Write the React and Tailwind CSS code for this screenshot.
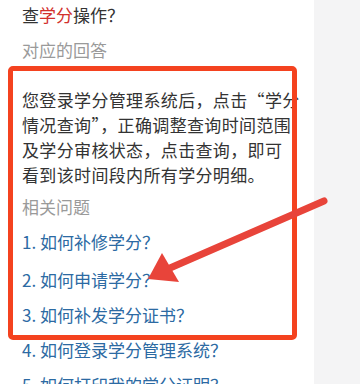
import React from "react";

export default function App() {
  const q = [
    { t: "1. 如何补修学分？", mt: "mt-[2px]" },
    { t: "2. 如何申请学分？", mt: "mt-[3px]" },
    { t: "3. 如何补发学分证书？", mt: "mt-0" },
    { t: "4. 如何登录学分管理系统？", mt: "mt-0" },
    { t: "5. 如何打印我的学分证明？", mt: "mt-0" },
  ];
  return (
    <div
      className="relative flex w-[360px] h-[384px] overflow-hidden bg-white"
      style={{ fontFamily: '"Noto Sans CJK SC", "Noto Sans", sans-serif' }}
    >
      <div className="w-[314px] shrink-0 bg-white pl-[22px] pr-[10px] text-[17px]">
        <div className="leading-[30px] text-[#333]">
          查<span className="text-[#d2302c]">学分</span>操作？
        </div>
        <div className="mt-[5px] leading-[30px] text-[#9a9a9a]">对应的回答</div>
        <div className="mt-[22px] leading-[25px] text-[#333] whitespace-nowrap tracking-[0.35px]">
          <div>您登录学分管理系统后，点击“学分</div>
          <div>情况查询”，正确调整查询时间范围</div>
          <div>及学分审核状态，点击查询，即可</div>
          <div>看到该时间段内所有学分明细。</div>
        </div>
        <div className="mt-[5px] leading-[30px] text-[#9a9a9a]">相关问题</div>
        {q.map((x) => (
          <div key={x.t} className={`${x.mt} leading-[35px] text-[#2c6aa3] whitespace-nowrap`}>
            {x.t}
          </div>
        ))}
      </div>
      <div className="flex-1 bg-[#f4f4f5]" />

      <div className="absolute left-[8px] top-[66px] w-[289px] h-[274px] rounded-[5px] border-[5px] border-[#f4421f]" />

      <svg className="absolute left-0 top-0" width="360" height="384" viewBox="0 0 360 384">
        <line x1="324" y1="201" x2="170" y2="268" stroke="#e8443a" strokeWidth="7" strokeLinecap="round" />
        <polygon points="148,279 162,253 179,282" fill="#e8443a" />
      </svg>
    </div>
  );
}
